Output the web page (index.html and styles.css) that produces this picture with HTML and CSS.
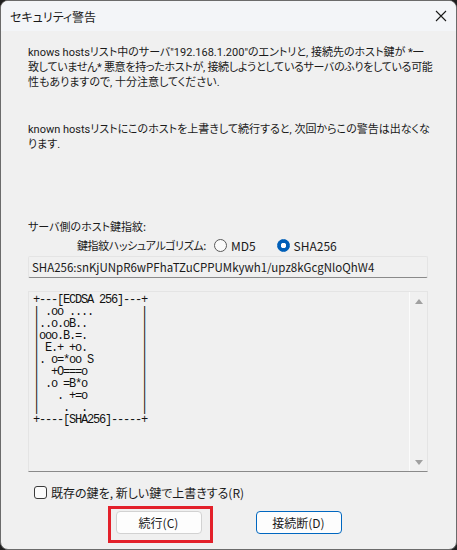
FILE: index.html
```html
<!DOCTYPE html>
<html lang="ja">
<head>
  <meta charset="UTF-8" />
  <meta name="viewport" content="width=device-width, initial-scale=1.0" />
  <title>セキュリティ警告</title>
  <link rel="stylesheet" href="styles.css">
</head>
<body>
  <div class="window">
    <div class="titlebar">
      <span class="title">セキュリティ警告</span>
      <svg class="close" width="12" height="12" viewBox="0 0 12 12">
        <path d="M1 1 L11 11 M11 1 L1 11" stroke="#1a1a1a" stroke-width="1.1" fill="none" />
      </svg>
    </div>

    <div class="content">
      <p class="msg">
        knows hostsリスト中のサーバ"192.168.1.200"のエントリと, 接続先のホスト鍵が *一<br />
        <span class="tight">致していません* 悪意を持ったホストが, 接続しようとしているサーバのふりをしている可能</span><br />
        性もありますので, 十分注意してください.
      </p>
      <p class="msg msg2">
        known hostsリストにこのホストを上書きして続行すると, 次回からこの警告は出なくな<br />
        ります.
      </p>

      <div class="fp-label">サーバ側のホスト鍵指紋:</div>
      <div class="algo">
        <span class="algo-label">鍵指紋ハッシュアルゴリズム:</span>
        <span class="radio"></span><span class="radio-text">MD5</span>
        <span class="radio checked"></span><span class="radio-text">SHA256</span>
      </div>
      <div class="fp-box">SHA256:snKjUNpR6wPFhaTZuCPPUMkywh1/upz8kGcgNloQhW4</div>

      <div class="art">
<pre>+---[ECDSA 256]---+
| .oo ....        |
|..o.oB..         |
|ooo.B.=.         |
| E.+ +o.         |
|. o=*oo S        |
|  +O===o         |
| .o =B*o         |
|   . +=o         |
|    .  .         |
+----[SHA256]-----+</pre>
        <div class="scrollbar">
          <span class="arrow up"></span>
          <span class="arrow down"></span>
        </div>
      </div>

      <label class="check">
        <span class="box"></span>既存の鍵を, 新しい鍵で上書きする(R)
      </label>

      <div class="buttons">
        <div class="btn-wrap">
          <button class="btn">続行(C)</button>
          <span class="highlight"></span>
        </div>
        <button class="btn default">接続断(D)</button>
      </div>
    </div>
  </div>
</body>
</html>
```

FILE: styles.css
```css
html {
  background: #1f1f1f;
}
body {
  margin: 0;
  font-family: "Noto Sans CJK JP", "Noto Sans", sans-serif;
  font-size: 12px;
  color: #1a1a1a;
  font-feature-settings: "palt";
}
.window {
  width: 457px;
  height: 550px;
  box-sizing: border-box;
  border: 1px solid #6b6b6b;
  border-radius: 8px;
  background: #f0f0f0;
  overflow: hidden;
  display: flex;
  flex-direction: column;
}
.titlebar {
  height: 30px;
  background: #f3f5f8;
  display: flex;
  align-items: center;
  justify-content: space-between;
  padding: 0 9px 0 9px;
  flex-shrink: 0;
}
.title {
  font-size: 12px;
}
.close {
  display: block;
}
.content {
  padding: 14px 28px 0 27px;
  display: flex;
  flex-direction: column;
}
.msg {
  margin: 0;
  font-family: "Roboto", "Noto Sans CJK JP", sans-serif;
  font-size: 11px;
  line-height: 15px;
  white-space: nowrap;
}
.tight {
  letter-spacing: -0.3px;
}
.msg2 {
  margin-top: 32px;
}
.fp-label {
  margin-top: 67px;
  font-size: 11px;
  line-height: 15px;
}
.algo {
  margin-top: 4px;
  line-height: 15px;
  height: 15px;
  display: flex;
  align-items: center;
  padding-left: 49px;
}
.algo-label {
  font-size: 11px;
  letter-spacing: -0.4px;
  margin-right: 8px;
}
.radio {
  width: 11px;
  height: 11px;
  border: 1px solid #5a5a5a;
  border-radius: 50%;
  background: #fafafa;
  margin-right: 4px;
}
.radio.checked {
  border-color: #005fb8;
  background: radial-gradient(circle, #ffffff 0 2.5px, #005fb8 3px);
}
.radio-text {
  margin-right: 21px;
}
.fp-box {
  margin-top: 3px;
  height: 22px;
  box-sizing: border-box;
  border: 1px solid #e4e4e4;
  border-bottom-color: #8a8a8a;
  border-radius: 2px;
  padding: 0 3px;
  line-height: 20px;
  font-size: 11.5px;
}
.art {
  margin-top: 13px;
  height: 181px;
  box-sizing: border-box;
  border: 1px solid #e4e4e4;
  border-bottom-color: #8a8a8a;
  display: flex;
  justify-content: space-between;
}
.art pre {
  margin: 0;
  padding: 2px 0 0 4px;
  font-family: "Liberation Mono", monospace;
  font-size: 12px;
  letter-spacing: -1.2px;
  line-height: 12px;
  color: #111;
}
.scrollbar {
  width: 17px;
  border-left: 1px solid #fbfbfb;
  display: flex;
  flex-direction: column;
  justify-content: space-between;
  align-items: center;
  padding: 7px 0 6px;
}
.arrow {
  width: 0;
  height: 0;
  border-left: 4px solid transparent;
  border-right: 4px solid transparent;
}
.arrow.up {
  border-bottom: 5px solid #a0a0a0;
}
.arrow.down {
  border-top: 5px solid #a0a0a0;
}
.check {
  margin-top: 13px;
  margin-left: 6px;
  line-height: 15px;
  display: flex;
  align-items: center;
}
.check .box {
  width: 11px;
  height: 11px;
  border: 1px solid #3a3a3a;
  border-radius: 3px;
  background: #fbfbfb;
  margin-right: 4px;
}
.buttons {
  margin-top: 11px;
  display: flex;
  justify-content: center;
  gap: 54px;
  padding-left: 1px;
}
.btn-wrap {
  position: relative;
}
.btn {
  width: 86px;
  height: 23px;
  box-sizing: border-box;
  border: 1px solid #d2d2d2;
  border-radius: 4px;
  background: #fdfdfd;
  font-family: "Noto Sans CJK JP", "Noto Sans", sans-serif;
  font-size: 12px;
  font-feature-settings: "palt";
  color: #1a1a1a;
  padding: 0;
}
.btn.default {
  border-color: #0067c0;
}
.highlight {
  position: absolute;
  left: -8px;
  top: -5px;
  width: 105px;
  height: 37px;
  box-sizing: border-box;
  border: 3px solid #e3202a;
}
```
